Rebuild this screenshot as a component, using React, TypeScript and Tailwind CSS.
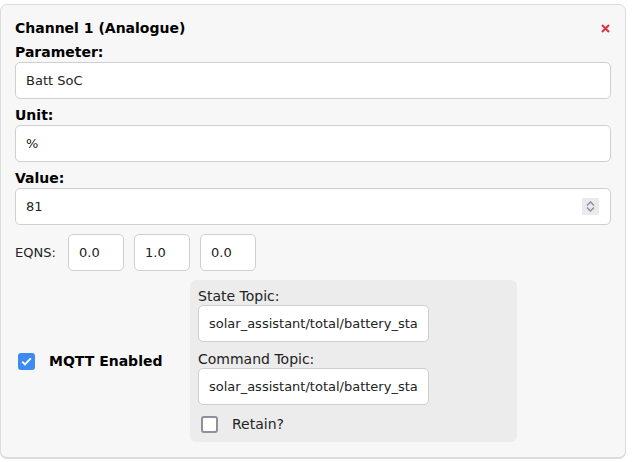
import React from 'react';

const font = { fontFamily: '"DejaVu Sans", Verdana, sans-serif' };

function TextInput({ value, className = '' }: { value: string; className?: string }) {
  return (
    <div
      className={`flex h-[37px] items-center rounded-[5px] border border-[#cfcfcf] bg-white px-[10px] text-[13px] text-[#222] ${className}`}
    >
      <div className="w-full overflow-hidden whitespace-nowrap">{value}</div>
    </div>
  );
}

function Label({ children }: { children: React.ReactNode }) {
  return <div className="mb-[2px] text-[14px] leading-4 font-bold text-black">{children}</div>;
}

function Spinner() {
  return (
    <div className="flex h-[17px] w-[17px] flex-col items-center justify-center gap-[1px] rounded-[2px] bg-[#e9e9ee]">
      <svg width="9" height="5" viewBox="0 0 9 5">
        <path d="M1 4.5 L4.5 1 L8 4.5" fill="none" stroke="#8a8a96" strokeWidth="1.3" />
      </svg>
      <svg width="9" height="5" viewBox="0 0 9 5">
        <path d="M1 0.5 L4.5 4 L8 0.5" fill="none" stroke="#8a8a96" strokeWidth="1.3" />
      </svg>
    </div>
  );
}

export default function App() {
  return (
    <div className="min-h-screen bg-white pt-[4px]" style={font}>
      <div className="w-[626px] rounded-[7px] border border-[#dcdcdc] bg-[#f7f7f7] px-[14px] pt-[15px] pb-[15px] shadow-[0_1px_0_#dcdcdc]">
        {/* Header */}
        <div className="mb-[8px] flex items-center justify-between">
          <div className="text-[14px] leading-4 font-bold text-black">Channel 1 (Analogue)</div>
          <svg width="9" height="9" viewBox="0 0 9 9" className="mr-[1px]">
            <path d="M1 1 L8 8 M8 1 L1 8" stroke="#e0303f" strokeWidth="2" />
          </svg>
        </div>

        <Label>Parameter:</Label>
        <TextInput value="Batt SoC" />

        <div className="mt-[8px]">
          <Label>Unit:</Label>
          <TextInput value="%" />
        </div>

        <div className="mt-[8px]">
          <Label>Value:</Label>
          <div className="flex h-[37px] items-center justify-between rounded-[5px] border border-[#cfcfcf] bg-white pr-[11px] pl-[10px] text-[13px] text-[#222]">
            <span>81</span>
            <Spinner />
          </div>
        </div>

        {/* EQNS */}
        <div className="mt-[9px] flex items-center">
          <span className="mr-[10px] w-[43px] text-[13px] text-[#222]">EQNS:</span>
          <div className="flex gap-[10px]">
            <TextInput value="0.0" className="w-[56px]" />
            <TextInput value="1.0" className="w-[56px]" />
            <TextInput value="0.0" className="w-[56px]" />
          </div>
        </div>

        {/* MQTT */}
        <div className="mt-[9px] flex items-center">
          <div className="flex w-[175px] items-center pl-[3px]">
            <div className="flex h-[17px] w-[17px] items-center justify-center rounded-[3px] bg-[#3d8bf0]">
              <svg width="11" height="9" viewBox="0 0 11 9">
                <path d="M1.2 4.6 L4 7.4 L9.8 1.4" fill="none" stroke="white" strokeWidth="2" />
              </svg>
            </div>
            <span className="ml-[14px] text-[14px] font-bold text-black">MQTT Enabled</span>
          </div>

          <div className="w-[327px] rounded-[6px] bg-[#ececec] px-[8px] pt-[8px] pb-[8px]">
            <div className="mb-[1px] text-[14px] leading-4 text-[#222]">State Topic:</div>
            <TextInput value="solar_assistant/total/battery_state_of_charge/state" className="w-[231px]" />
            <div className="mt-[9px] mb-[1px] text-[14px] leading-4 text-[#222]">Command Topic:</div>
            <TextInput value="solar_assistant/total/battery_state_of_charge/set" className="w-[231px]" />
            <div className="mt-[9px] flex h-[20px] items-center">
              <div className="ml-[3px] h-[17px] w-[17px] rounded-[3px] border-2 border-[#8f8f9d] bg-white" />
              <span className="ml-[14px] text-[14px] text-[#222]">Retain?</span>
            </div>
          </div>
        </div>
      </div>
    </div>
  );
}
